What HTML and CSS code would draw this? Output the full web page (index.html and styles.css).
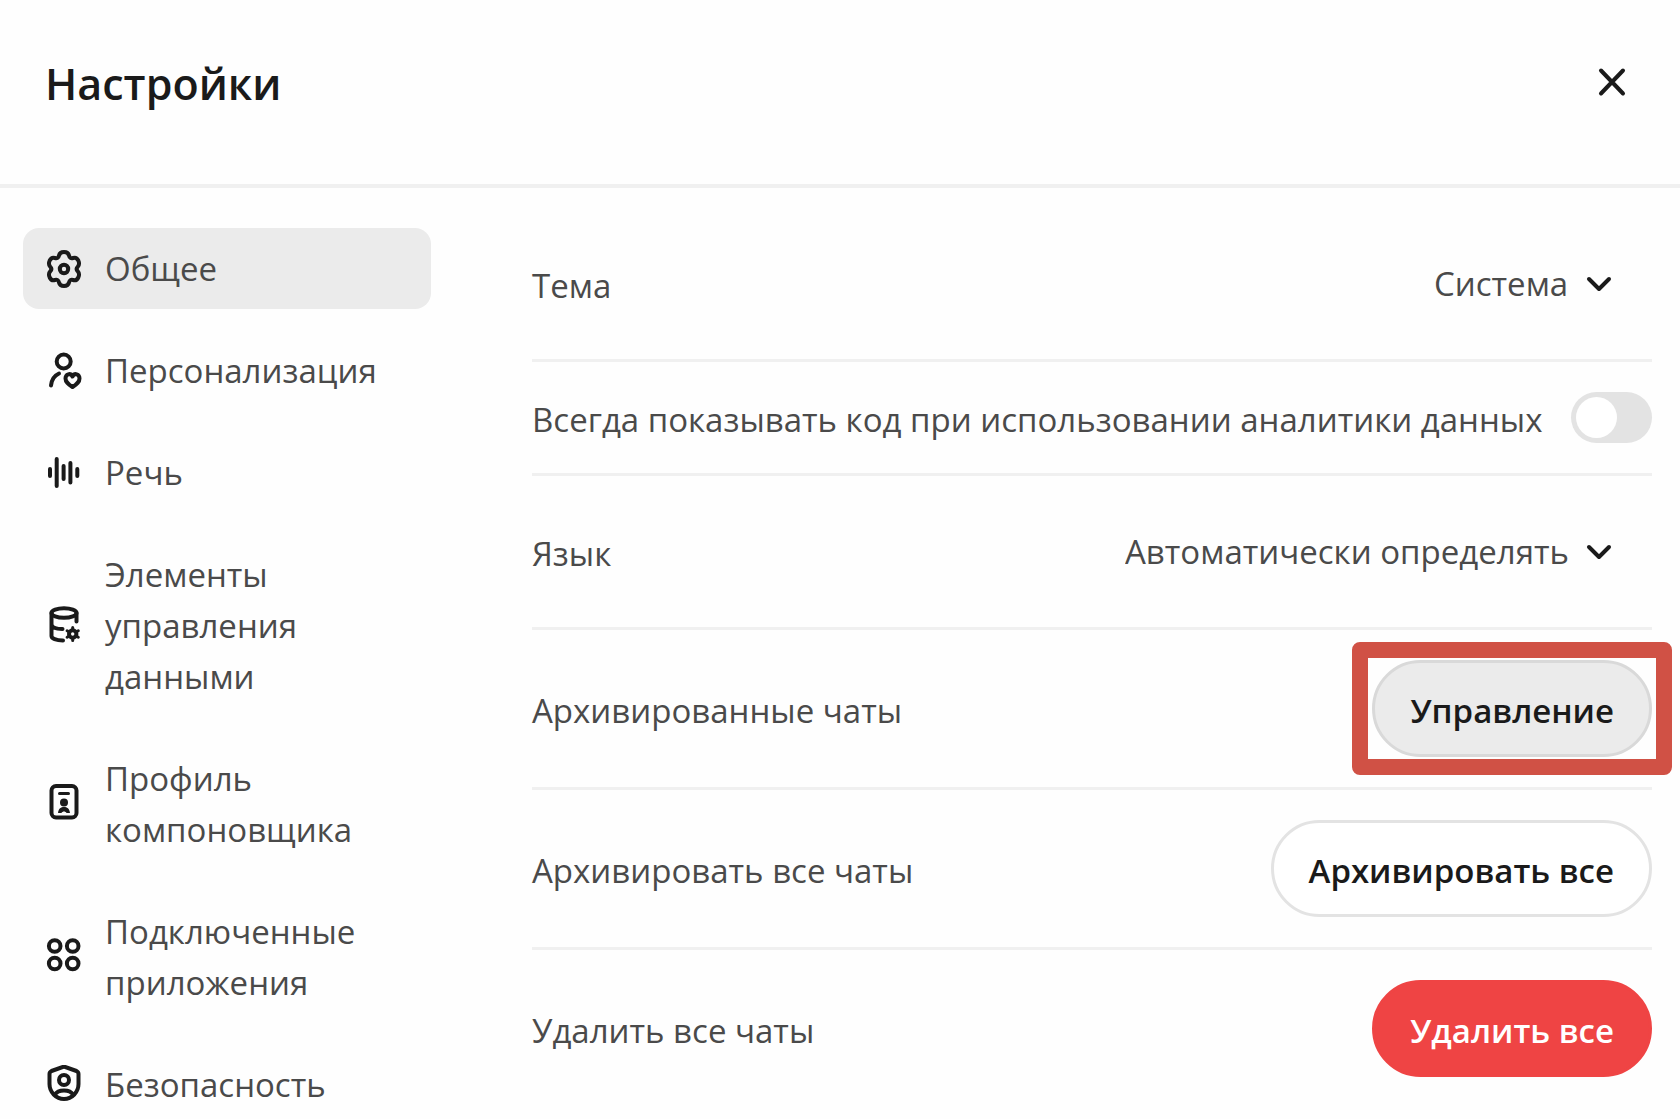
FILE: index.html
```html
<!DOCTYPE html>
<html lang="ru">
<head>
  <meta charset="UTF-8" />
  <title>Настройки</title>
  <link rel="stylesheet" href="styles.css">
</head>
<body>
  <div class="settings">
    <header class="header">
      <h1>Настройки</h1>
      <button type="button" class="close" aria-label="Закрыть">
        <svg width="30" height="30" viewBox="0 0 30 30"><path d="M4 3.5L26 26.5M26 3.5L4 26.5" /></svg>
      </button>
    </header>

    <div class="content">
      <nav class="menu">
        <a href="#general" class="menu-item active">
          <svg class="icon" viewBox="0 0 36 40">
            <path d="M18 3.1Q22.2 3.1 23 6.5Q23.8 10 27.1 9Q30.5 7.9 32.3 11.5Q34 15.2 31.8 17.6Q29.5 20 31.8 22.4Q34 24.8 32.3 28.5Q30.5 32.1 27.1 31Q23.8 30 23 33.5Q22.2 36.9 18 36.9Q13.8 36.9 13 33.5Q12.2 30 8.9 31Q5.5 32.1 3.7 28.5Q2 24.8 4.2 22.4Q6.5 20 4.2 17.6Q2 15.2 3.7 11.5Q5.5 7.9 8.9 9Q12.2 10 13 6.5Q13.8 3.1 18 3.1Z" />
            <circle cx="18" cy="20" r="4.2" />
          </svg>
          <span>Общее</span>
        </a>
        <a href="#personalization" class="menu-item">
          <svg class="icon" viewBox="0 0 36 40">
            <circle cx="17.7" cy="10.5" r="7" />
            <path d="M5 34.5C5.6 29 8.5 24.5 13 22.5" />
            <path d="M26.5 36C22 33 19.5 31 19.5 27.5C19.5 23 24.5 21.5 26.5 25.5C28.5 21.5 33.5 23 33.5 27.5C33.5 31 31 33 26.5 36Z" />
          </svg>
          <span>Персонализация</span>
        </a>
        <a href="#speech" class="menu-item">
          <svg class="icon" viewBox="0 0 36 40">
            <path d="M4 16V23M10.7 6V33M17.6 13V26M24.4 10V29.5M31.3 16V23" />
          </svg>
          <span>Речь</span>
        </a>
        <a href="#data" class="menu-item">
          <svg class="icon" viewBox="0 0 36 40">
            <ellipse cx="18" cy="7" rx="12.5" ry="4.7" />
            <path d="M5.5 7V30C5.5 32.5 10 34.5 17 34.5M5.5 18.5C6 21.5 10.5 23 16.5 23M30.5 7V15.5" />
            <circle cx="26.7" cy="28" r="3.7" />
            <path class="thin" d="M26.7 24V21.5M26.7 32V34.5M30.2 26L32.3 24.8M23.2 30L21.1 31.2M30.2 30L32.3 31.2M23.2 26L21.1 24.8" />
          </svg>
          <span>Элементы управления данными</span>
        </a>
        <a href="#profile" class="menu-item">
          <svg class="icon" viewBox="0 0 36 40">
            <rect x="5.5" y="2" width="25" height="31.5" rx="4.5" />
            <path class="thin" d="M13.5 9.5H22.5" />
            <circle class="solid" cx="18" cy="18.5" r="4" />
            <path class="solid" d="M12 29C12.5 24.5 15 23 18 23C21 23 23.5 24.5 24 29H20.5C19.5 27 16.5 27 15.5 29Z" />
          </svg>
          <span>Профиль компоновщика</span>
        </a>
        <a href="#apps" class="menu-item">
          <svg class="icon" viewBox="0 0 36 40">
            <circle cx="8.7" cy="9" r="5.8" />
            <circle cx="26.7" cy="9" r="5.8" />
            <circle cx="8.7" cy="26.5" r="5.8" />
            <circle cx="26.7" cy="26.5" r="5.8" />
          </svg>
          <span>Подключенные приложения</span>
        </a>
        <a href="#security" class="menu-item">
          <svg class="icon" viewBox="0 0 36 40">
            <path d="M18 1.5L30.5 6Q32.5 7 32.5 9V19C32.5 27 26 34 18 34C10 34 3.5 27 3.5 19V9Q3.5 7 5.5 6Z" />
            <circle cx="18" cy="15" r="5" />
            <path d="M9 29.5C12 24 24 24 27 29.5" />
          </svg>
          <span>Безопасность</span>
        </a>
      </nav>

      <main class="options">
        <div class="row">
          <label class="name" for="theme">Тема</label>
          <div class="select">
            <select id="theme"><option>Система</option></select>
            <svg class="chevron" viewBox="0 0 26 16"><path d="M3 3L13 13L23 3" /></svg>
          </div>
        </div>
        <div class="row">
          <label class="name" for="showCode">Всегда показывать код при использовании аналитики данных</label>
          <input type="checkbox" id="showCode" class="switch" role="switch" />
        </div>
        <div class="row">
          <label class="name" for="language">Язык</label>
          <div class="select">
            <select id="language"><option>Автоматически определять</option></select>
            <svg class="chevron" viewBox="0 0 26 16"><path d="M3 3L13 13L23 3" /></svg>
          </div>
        </div>
        <div class="row">
          <span class="name">Архивированные чаты</span>
          <div class="highlight">
            <button type="button" class="btn pressed">Управление</button>
          </div>
        </div>
        <div class="row">
          <span class="name">Архивировать все чаты</span>
          <button type="button" class="btn">Архивировать все</button>
        </div>
        <div class="row">
          <span class="name">Удалить все чаты</span>
          <button type="button" class="btn danger">Удалить все</button>
        </div>
      </main>
    </div>
  </div>
</body>
</html>
```
FILE: styles.css
```css
* {
  box-sizing: border-box;
}

body {
  margin: 0;
  background: #fefefe;
  color: #4a4a4a;
  font-family: "Open Sans", "Noto Sans", sans-serif;
  font-size: 33px;
  line-height: 51px;
}

button,
select {
  font: inherit;
  color: inherit;
}

svg {
  display: block;
  flex: none;
  fill: none;
  stroke: #1a1a1a;
  stroke-width: 4;
  stroke-linecap: round;
  stroke-linejoin: round;
}

.settings {
  height: 100vh;
  overflow: hidden;
}

.header {
  display: flex;
  justify-content: space-between;
  align-items: center;
  padding: 52px 45px 68px;
  border-bottom: 4px solid #f0f0f0;
}

h1 {
  margin: 0;
  font-size: 43px;
  line-height: 64px;
  font-weight: 600;
  color: #1a1a1a;
}

.close {
  padding: 8px;
  margin-bottom: 4px;
  border: 0;
  background: none;
}

.content {
  display: flex;
  align-items: flex-start;
  gap: 101px;
  padding: 20px 28px 0 23px;
}

/* меню */
.menu {
  display: flex;
  flex-direction: column;
  flex: none;
  gap: 21px;
  width: 408px;
  padding-top: 20px;
}

.menu-item {
  display: flex;
  align-items: center;
  gap: 23px;
  padding: 15px 23px;
  border-radius: 16px;
  color: inherit;
  text-decoration: none;
}

.menu-item.active {
  background: #ebebeb;
}

.icon {
  width: 36px;
  height: 40px;
}

.thin {
  stroke-width: 3;
}

.solid {
  fill: #1a1a1a;
  stroke: none;
}

/* параметры */
.options {
  flex: 1;
  min-width: 0;
}

.row {
  display: flex;
  justify-content: space-between;
  align-items: center;
  padding: 30px 0;
  border-bottom: 3px solid #f0f0f0;
  white-space: nowrap;
}

.row:last-child {
  border-bottom: 0;
}

.name {
  margin: 2px 0 -2px;
}

.select {
  position: relative;
}

select {
  display: block;
  height: 91px;
  padding: 0 83px 0 0;
  border: 0;
  background: none;
  appearance: none;
}

.chevron {
  position: absolute;
  top: 38px;
  right: 40px;
  width: 26px;
  height: 16px;
  pointer-events: none;
}

.switch {
  flex: none;
  width: 81px;
  height: 51px;
  margin: 0;
  padding: 5px;
  border-radius: 26px;
  background: #e3e3e3;
  appearance: none;
}

.switch::before {
  content: "";
  display: block;
  width: 41px;
  height: 41px;
  border-radius: 50%;
  background: #fff;
}

.switch:checked {
  background: #1a1a1a;
}

.switch:checked::before {
  margin-left: auto;
}

.btn {
  display: block;
  height: 97px;
  padding: 3px 35px 0;
  border: 3px solid #e3e3e3;
  border-radius: 49px;
  background: #fff;
  color: #1a1a1a;
  font-weight: 600;
}

.btn.pressed {
  border-color: #d9d9d9;
  background: #ebebeb;
}

.btn.danger {
  border-color: #ef4444;
  background: #ef4444;
  color: #fff;
}

.highlight {
  position: relative;
}

.highlight::after {
  content: "";
  position: absolute;
  inset: -18px -20px;
  border: 16px solid #d05145;
  border-radius: 8px;
  pointer-events: none;
}
```
